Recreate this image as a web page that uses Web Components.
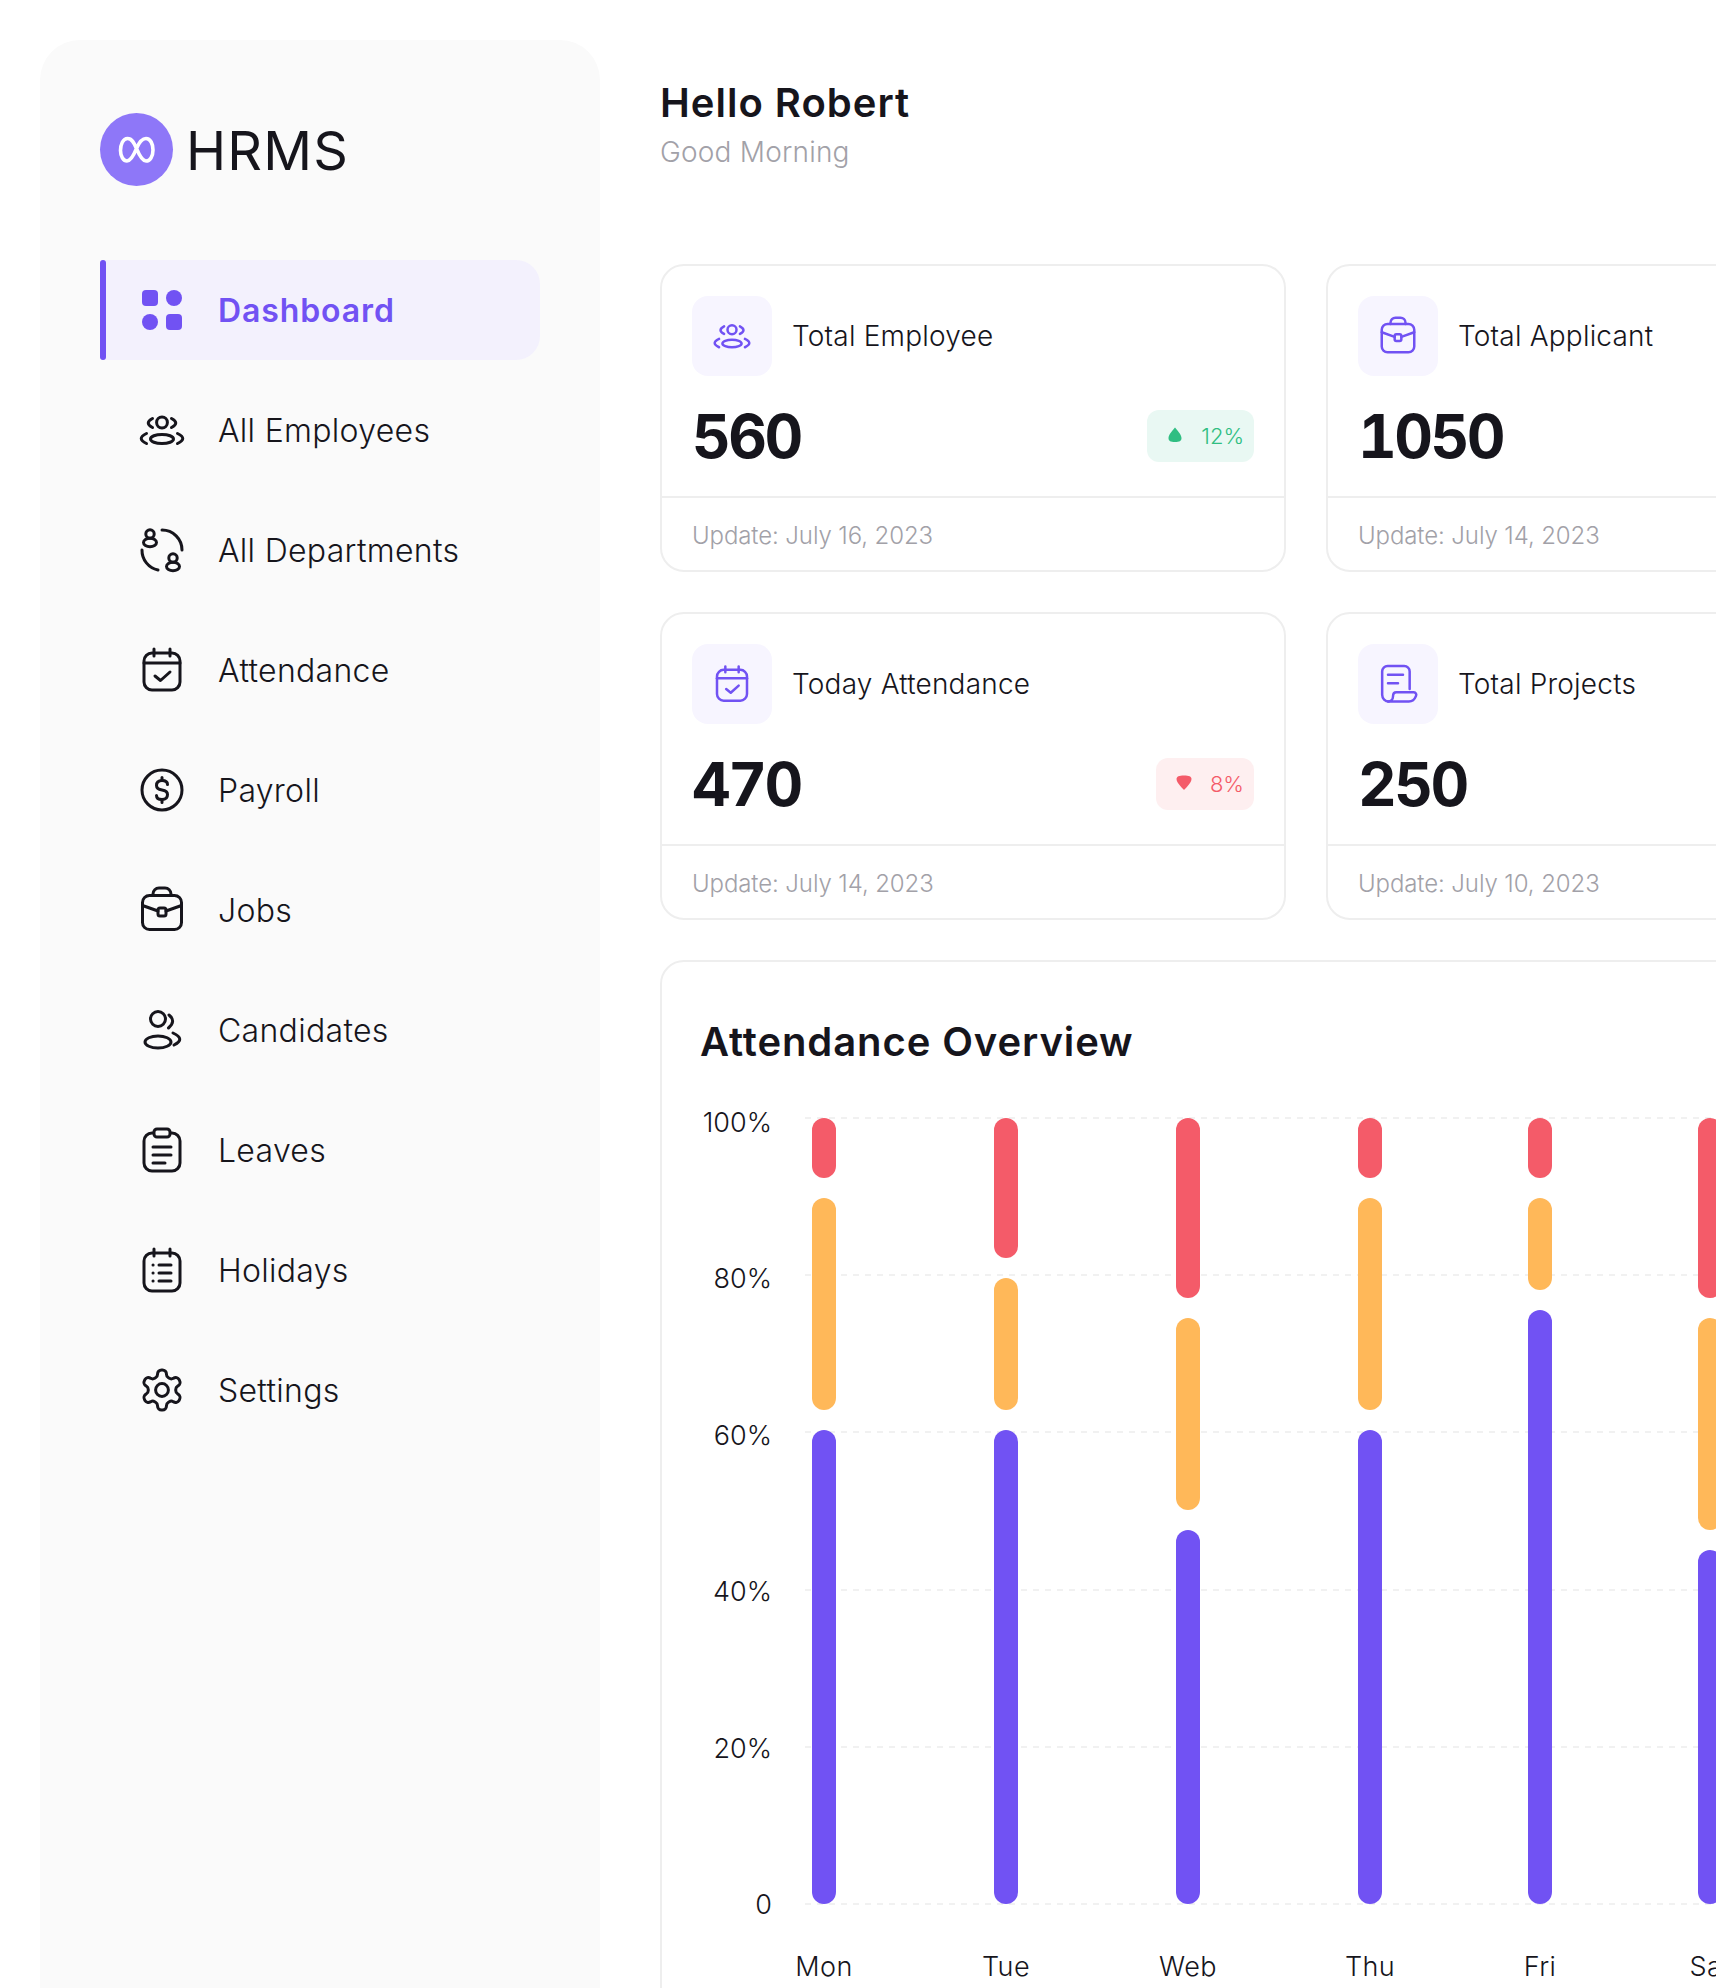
<!DOCTYPE html>
<html lang="en">
<head>
<meta charset="utf-8">
<title>HRMS</title>
<style>
  html, body { margin: 0; height: 1988px; overflow: hidden; background: #fff; }
  body { font-family: "Inter", "Noto Sans", sans-serif; color: #16151c; }
</style>
</head>
<body>
<hr-app>
  <hr-sidebar slot="side">
    <hr-nav icon="dashboard" active>Dashboard</hr-nav>
    <hr-nav icon="employees">All Employees</hr-nav>
    <hr-nav icon="departments">All Departments</hr-nav>
    <hr-nav icon="attendance">Attendance</hr-nav>
    <hr-nav icon="payroll">Payroll</hr-nav>
    <hr-nav icon="jobs">Jobs</hr-nav>
    <hr-nav icon="candidates">Candidates</hr-nav>
    <hr-nav icon="leaves">Leaves</hr-nav>
    <hr-nav icon="holidays">Holidays</hr-nav>
    <hr-nav icon="settings">Settings</hr-nav>
  </hr-sidebar>
  <hr-stat icon="employees" label="Total Employee" value="560" trend="up" percent="12%" updated="Update: July 16, 2023"></hr-stat>
  <hr-stat icon="jobs" label="Total Applicant" value="1050" updated="Update: July 14, 2023"></hr-stat>
  <hr-stat icon="attendance" label="Today Attendance" value="470" trend="down" percent="8%" updated="Update: July 14, 2023"></hr-stat>
  <hr-stat icon="projects" label="Total Projects" value="250" updated="Update: July 10, 2023"></hr-stat>
  <hr-chart slot="chart"></hr-chart>
</hr-app>

<script>
(function () {
    const ICONS = {
        dashboard: `<rect x="4" y="4" width="16" height="16" rx="4" fill="currentColor" stroke="none"/><circle cx="36" cy="12" r="8" fill="currentColor" stroke="none"/><circle cx="12" cy="36" r="8" fill="currentColor" stroke="none"/><rect x="28" y="28" width="16" height="16" rx="4" fill="currentColor" stroke="none"/>`,
        employees: `<circle cx="24" cy="16.5" r="5.4"/><ellipse cx="24" cy="33" rx="11.5" ry="4.6"/><path d="M14.5 12.5Q6 17 14.5 21.5"/><path d="M33.5 12.5Q42 17 33.5 21.5"/><path d="M8.5 27.5Q-2 32.5 8.5 37.5"/><path d="M39.5 27.5Q50 32.5 39.5 37.5"/>`,
        departments: `<circle cx="12" cy="8" r="4.2"/><ellipse cx="12" cy="16.5" rx="6.5" ry="4.2"/><circle cx="35" cy="32" r="4.2"/><ellipse cx="35" cy="40.5" rx="6.5" ry="4.2"/><path d="M24 4A20 20 0 0 1 44 24"/><path d="M4 24A20 20 0 0 0 20 44"/>`,
        attendance: `<rect x="6" y="7" width="36" height="37" rx="8"/><path d="M6 17H42"/><path d="M16 3V10M32 3V10"/><path d="M17 30L22.5 34.5L32 26"/>`,
        payroll: `<circle cx="24" cy="24" r="20"/><path d="M29.5 18.5C29.5 16 27.5 14.5 24 14.5C20.5 14.5 18.5 16.5 18.5 19.5C18.5 23 21 23.5 24 24C27 24.5 29.5 25 29.5 28.5C29.5 31.5 27.5 33.5 24 33.5C20.5 33.5 18.5 32 18.5 29.5"/><path d="M24 11.5V14.5M24 33.5V36.5"/>`,
        jobs: `<rect x="4.5" y="9.5" width="39" height="34" rx="7"/><path d="M15 9.5V8A6 6 0 0 1 21 2H27A6 6 0 0 1 33 8V9.5"/><path d="M4.5 19.5L20 25M43.5 19.5L28 25"/><rect x="20" y="22" width="8" height="8" rx="2"/>`,
        candidates: `<circle cx="20" cy="13" r="7.5"/><ellipse cx="20" cy="36" rx="13" ry="6"/><path d="M31 9Q38.5 15 30.5 22"/><path d="M35 27Q48 33 36 39"/>`,
        leaves: `<rect x="6" y="7" width="36" height="38" rx="8"/><rect x="16" y="3" width="16" height="8" rx="3" fill="#fafafa"/><path d="M15 21H33M15 29H33M15 37H27"/>`,
        holidays: `<rect x="6" y="7" width="36" height="38" rx="8"/><path d="M16 3V10M32 3V10"/><path d="M21 19H33M21 27H33M21 35H33"/><path d="M15 19H15.1M15 27H15.1M15 35H15.1"/>`,
        settings: `<g transform="scale(2)" stroke-width="1.5"><path d="M12.22 2h-.44a2 2 0 0 0-2 2v.18a2 2 0 0 1-1 1.73l-.43.25a2 2 0 0 1-2 0l-.15-.08a2 2 0 0 0-2.73.73l-.22.38a2 2 0 0 0 .73 2.73l.15.1a2 2 0 0 1 1 1.72v.51a2 2 0 0 1-1 1.74l-.15.09a2 2 0 0 0-.73 2.73l.22.38a2 2 0 0 0 2.73.73l.15-.08a2 2 0 0 1 2 0l.43.25a2 2 0 0 1 1 1.73V20a2 2 0 0 0 2 2h.44a2 2 0 0 0 2-2v-.18a2 2 0 0 1 1-1.73l.43-.25a2 2 0 0 1 2 0l.15.08a2 2 0 0 0 2.73-.73l.22-.39a2 2 0 0 0-.73-2.73l-.15-.08a2 2 0 0 1-1-1.74v-.5a2 2 0 0 1 1-1.74l.15-.09a2 2 0 0 0 .73-2.73l-.22-.38a2 2 0 0 0-2.73-.73l-.15.08a2 2 0 0 1-2 0l-.43-.25a2 2 0 0 1-1-1.73V4a2 2 0 0 0-2-2z"/><circle cx="12" cy="12" r="3.2"/></g>`,
        projects: `<path d="M38 30V9A6.5 6.5 0 0 0 31.5 2.5H11.5A6.5 6.5 0 0 0 5 9V37A8 8 0 0 0 13 45"/><path d="M12 45A6 6 0 0 0 18 39Q18 34 22 34H43A3 3 0 0 1 45.5 38.5Q43 45 37 45H12Z"/><path d="M12 13H30M12 23H24"/>`
    };

    class HrIcon extends HTMLElement {
        constructor() {
            super();
            this.attachShadow({ mode: "open" });
        }
        connectedCallback() {
            let size = this.getAttribute("size") || 48;
            this.shadowRoot.innerHTML = `
              <style>
                :host { display: block; width: ${size}px; height: ${size}px; flex: none; }
                svg { display: block; width: 100%; height: 100%; overflow: visible; }
              </style>
              <svg viewBox="0 0 48 48" fill="none" stroke="currentColor" stroke-width="3" stroke-linecap="round" stroke-linejoin="round">${ICONS[this.getAttribute("name")]}</svg>`;
        }
    }
    customElements.define("hr-icon", HrIcon);

    let appTmpl = document.createElement("template");
    appTmpl.innerHTML = `
      <style>
        :host { display: flex; gap: 60px; padding: 40px 0 0 40px; width: 1952px; box-sizing: border-box; }
        main { width: 1292px; flex: none; padding-top: 38px; }
        h1 { margin: 0; font-size: 40px; line-height: 50px; font-weight: 600; letter-spacing: 1px; }
        p { margin: 6px 0 0; font-size: 28px; line-height: 36px; font-weight: 300; color: #a2a1a8; letter-spacing: .2px; }
        .stats { display: grid; grid-template-columns: 626px 626px; gap: 40px; margin: 94px 0 40px; }
      </style>
      <slot name="side"></slot>
      <main>
        <h1>Hello Robert</h1>
        <p>Good Morning</p>
        <div class="stats"><slot></slot></div>
        <slot name="chart"></slot>
      </main>`;

    class HrApp extends HTMLElement {
        constructor() {
            super();
            this.attachShadow({ mode: "open" }).appendChild(appTmpl.content.cloneNode(true));
        }
    }
    customElements.define("hr-app", HrApp);

    let sideTmpl = document.createElement("template");
    sideTmpl.innerHTML = `
      <style>
        :host { display: block; width: 560px; height: 2100px; flex: none; box-sizing: border-box; padding: 73px 60px 0; background: #fafafa; border-radius: 40px; }
        .logo { display: flex; align-items: center; gap: 13px; height: 73px; margin-bottom: 74px; font-size: 54px; letter-spacing: 1.2px; font-weight: 400; }
        .logo span { padding-top: 2px; }
        .mark { width: 73px; height: 73px; border-radius: 50%; background: #8e77f8; flex: none; }
        .mark svg { display: block; }
        nav { display: flex; flex-direction: column; gap: 20px; }
      </style>
      <div class="logo">
        <div class="mark"><svg width="73" height="73" viewBox="0 0 73 73" fill="none" stroke="#fff" stroke-width="3.6"><path d="M27.5 25.5C23 25.500 20.500 31.500 20.500 37.500C20.500 43.500 23.500 48 27 48C31 48 34 41.500 36.500 35.500C39.500 28.500 42.500 25.500 46 25.500C50.500 25.500 53 31 53 37C53 43.500 50 48 46 48C42 48 39 41.500 36.500 35.500C34 29.500 32 25.500 27.500 25.500Z"/></svg></div>
        <span>HRMS</span>
      </div>
      <nav><slot></slot></nav>`;

    class HrSidebar extends HTMLElement {
        constructor() {
            super();
            this.attachShadow({ mode: "open" }).appendChild(sideTmpl.content.cloneNode(true));
        }
    }
    customElements.define("hr-sidebar", HrSidebar);

    class HrNav extends HTMLElement {
        constructor() {
            super();
            this.attachShadow({ mode: "open" });
        }
        connectedCallback() {
            this.shadowRoot.innerHTML = `
              <style>
                :host { display: flex; align-items: center; gap: 32px; height: 100px; padding-left: 38px; box-sizing: border-box; font-size: 32px; font-weight: 300; letter-spacing: .3px; color: #16151c; position: relative; }
                :host([active]) { color: #7152f3; font-weight: 600; letter-spacing: .9px; background: #f3f1fd; border-radius: 6px 24px 24px 6px; }
                :host([active])::before { content: ""; position: absolute; left: 0; top: 0; bottom: 0; width: 6px; border-radius: 3px; background: #7152f3; }
              </style>
              <hr-icon name="${this.getAttribute("icon")}"></hr-icon>
              <span><slot></slot></span>`;
        }
    }
    customElements.define("hr-nav", HrNav);

    class HrStat extends HTMLElement {
        constructor() {
            super();
            this.attachShadow({ mode: "open" });
        }
        connectedCallback() {
            let trend = this.getAttribute("trend");
            let arrow = trend === "up"
                ? `<path d="M8 0.5C10 3 14.5 7.5 14.5 11C14.5 14 12.5 15 8 15C3.5 15 1.5 14 1.5 11C1.5 7.5 6 3 8 0.5Z"/>`
                : `<path d="M8 15C10 13 15.5 7.5 15.5 4C15.5 1.5 13 0.5 8 0.5C3 0.5 0.5 1.5 0.5 4C0.5 7.5 6 13 8 15Z"/>`;
            let badge = trend ? `<span class="badge ${trend}"><svg viewBox="0 0 16 16">${arrow}</svg>${this.getAttribute("percent")}</span>` : "";
            this.shadowRoot.innerHTML = `
              <style>
                :host { display: block; height: 308px; box-sizing: border-box; border: 2px solid #eeeeee; border-radius: 24px; background: #fff; }
                .body { height: 232px; box-sizing: border-box; padding: 30px 30px 0; border-bottom: 2px solid #eeeeee; }
                .head { display: flex; align-items: center; gap: 20px; font-size: 28px; font-weight: 300; letter-spacing: .2px; }
                .box { width: 80px; height: 80px; border-radius: 16px; background: #f7f5ff; color: #7152f3; display: flex; align-items: center; justify-content: center; flex: none; }
                .row { display: flex; align-items: center; justify-content: space-between; height: 52px; margin-top: 34px; }
                .value { font-size: 60px; font-weight: 700; line-height: 54px; letter-spacing: -2.5px; font-feature-settings: "tnum"; }
                .badge { display: flex; align-items: center; gap: 18px; height: 52px; padding: 0 10px 0 20px; border-radius: 12px; font-size: 22px; font-weight: 300; color: #30be82; background: #e9f8f3; }
                .badge svg { display: block; width: 16px; height: 16px; fill: currentColor; margin-top: -2px; }
                .badge.down { color: #f45b69; background: #feeff0; }
                .foot { padding: 0 30px; height: 72px; line-height: 76px; font-size: 24px; font-weight: 300; letter-spacing: -.1px; color: #a2a1a8; }
              </style>
              <div class="body">
                <div class="head">
                  <div class="box"><hr-icon name="${this.getAttribute("icon")}" size="40"></hr-icon></div>
                  <span>${this.getAttribute("label")}</span>
                </div>
                <div class="row">
                  <span class="value">${this.getAttribute("value")}</span>
                  ${badge}
                </div>
              </div>
              <div class="foot">${this.getAttribute("updated")}</div>`;
        }
    }
    customElements.define("hr-stat", HrStat);

    // red, orange heights in px, purple takes the rest
    const DAYS = [
        ["Mon", 60, 212, 182],
        ["Tue", 140, 132, 182],
        ["Web", 180, 192, 182],
        ["Thu", 60, 212, 170],
        ["Fri", 60, 92, 170],
        ["Sat", 180, 212, 182]
    ];

    class HrChart extends HTMLElement {
        constructor() {
            super();
            this.attachShadow({ mode: "open" });
        }
        connectedCallback() {
            let axis = ["100%", "80%", "60%", "40%", "20%", "0"].map(t => `<span>${t}</span>`).join("");
            let lines = "<i></i>".repeat(6);
            let cols = DAYS.map(d => d[3] + "px").join(" ");
            let bars = DAYS.map(d => `
              <div class="day">
                <div class="stack">
                  <b style="height:${d[1]}px;background:#f45b69"></b>
                  <b style="height:${d[2]}px;background:#ffb859"></b>
                  <b style="flex:1;background:#7152f3"></b>
                </div>
                <div class="name"><span>${d[0]}</span></div>
              </div>`).join("");
            this.shadowRoot.innerHTML = `
              <style>
                :host { display: block; height: 1200px; box-sizing: border-box; border: 2px solid #eeeeee; border-radius: 24px; padding: 55px 38px 0; background: #fff; }
                h2 { margin: 0 0 50px; font-size: 40px; line-height: 50px; font-weight: 600; letter-spacing: .9px; }
                .chart { display: flex; gap: 33px; font-size: 27px; font-weight: 300; }
                .axis { width: 72px; height: 812px; margin-top: -9px; flex: none; display: flex; flex-direction: column; justify-content: space-between; align-items: flex-end; line-height: 30px; }
                .plot { position: relative; padding: 1px 0 0 7px; }
                .lines { position: absolute; left: 0; top: 0; width: 1100px; height: 788px; display: flex; flex-direction: column; justify-content: space-between; }
                .lines i { display: block; height: 2px; background: repeating-linear-gradient(90deg, #f1f1f1 0 6px, transparent 6px 12px); }
                .days { position: relative; display: grid; grid-template-columns: ${cols}; }
                .day { width: 24px; }
                .stack { height: 786px; display: flex; flex-direction: column; gap: 20px; }
                .stack b { display: block; border-radius: 12px; }
                .name { display: flex; justify-content: center; white-space: nowrap; line-height: 36px; margin-top: 45px; letter-spacing: .4px; }
              </style>
              <h2>Attendance Overview</h2>
              <div class="chart">
                <div class="axis">${axis}</div>
                <div class="plot">
                  <div class="lines">${lines}</div>
                  <div class="days">${bars}</div>
                </div>
              </div>`;
        }
    }
    customElements.define("hr-chart", HrChart);
})();
</script>
</body>
</html>
